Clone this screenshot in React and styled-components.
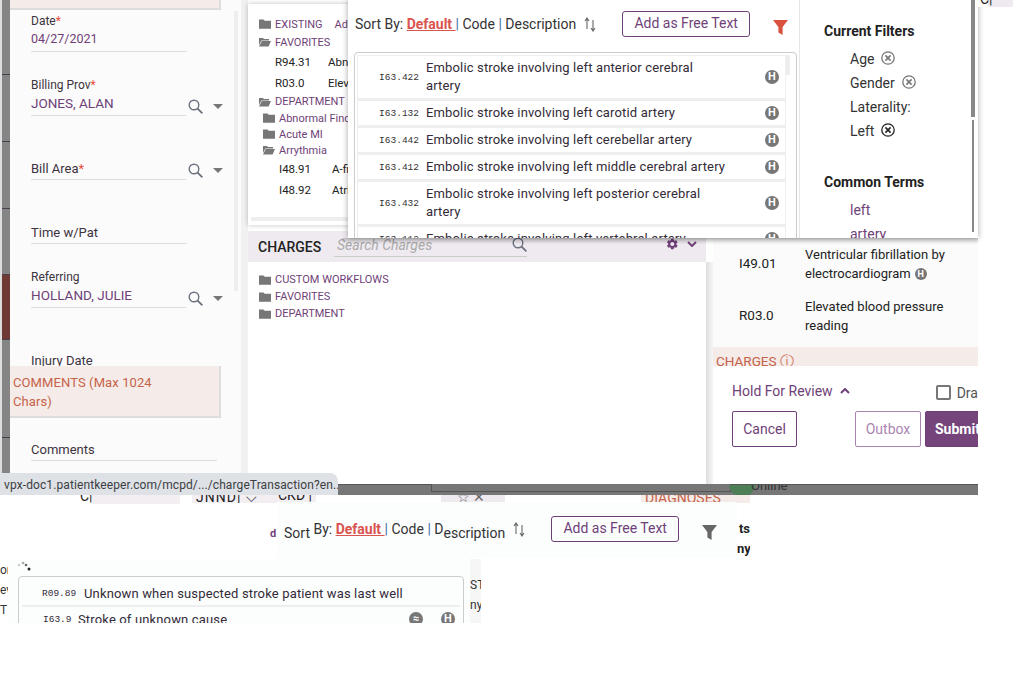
import React from "react";
import styled, { createGlobalStyle, css } from "styled-components";

const purple = "#6f3f78";
const rust = "#c5634a";
const font = `Roboto, "Liberation Sans", sans-serif`;

const GlobalStyle = createGlobalStyle`
  html, body { margin: 0; padding: 0; background: #fff; }
  body { font-family: ${font}; color: #333; }
  * { box-sizing: border-box; }
`;

// every broken browser layer in the shot sits on a free canvas
const win = (x, y, w, h) => css`
  position: absolute;
  left: ${x}px;
  top: ${y}px;
  width: ${w}px;
  height: ${h}px;
  overflow: hidden;
`;

const Canvas = styled.div`
  position: relative;
  width: 1034px;
  height: 682px;
  overflow: hidden;
  background: #fff;
`;

/* ---------- icons ---------- */
const Folder = ({ open }) => (
  <FolderSvg viewBox="0 0 12 10">
    {open ? (
      <path d="M0 1h4l1 1h5v1.4H2.4L0 8zM0 9.6 2.8 4H12L9.6 9.6z" fill="#777" />
    ) : (
      <path d="M0 .6h4.6l1 1.2H12v8H0z" fill="#777" />
    )}
  </FolderSvg>
);
const FolderSvg = styled.svg`
  width: 12px;
  height: 10px;
  flex: none;
`;

const SearchIcon = () => (
  <SearchSvg viewBox="0 0 15 15">
    <circle cx="6" cy="6" r="4.8" fill="none" stroke="#6b7280" strokeWidth="1.4" />
    <path d="M9.6 9.6 14.4 14.4" stroke="#6b7280" strokeWidth="1.8" />
  </SearchSvg>
);
const SearchSvg = styled.svg`
  width: 15px;
  height: 15px;
  flex: none;
`;

const Caret = styled.span`
  width: 0;
  height: 0;
  border-left: 5px solid transparent;
  border-right: 5px solid transparent;
  border-top: 5px solid #777;
  margin-left: 10px;
  flex: none;
`;

const SortArrows = () => (
  <SortSvg viewBox="0 0 12 15">
    <path d="M3 12V2M1 4l2-3 2 3" fill="none" stroke="#666" strokeWidth="1.1" />
    <path d="M9 3v10M7 11l2 3 2-3" fill="none" stroke="#666" strokeWidth="1.1" />
  </SortSvg>
);
const SortSvg = styled.svg`
  width: 12px;
  height: 15px;
  flex: none;
`;

const Funnel = ({ color }) => (
  <FunnelSvg viewBox="0 0 15 15">
    <path d="M0 0h15L9.6 7v8L5.4 12.6V7z" fill={color} />
  </FunnelSvg>
);
const FunnelSvg = styled.svg`
  width: 15px;
  height: 15px;
  flex: none;
`;

const HBadge = styled.span`
  width: ${(p) => p.$size || 14}px;
  height: ${(p) => p.$size || 14}px;
  border-radius: 50%;
  background: #777;
  color: #fff;
  font-size: ${(p) => (p.$size || 14) - 3}px;
  font-weight: 700;
  line-height: ${(p) => p.$size || 14}px;
  text-align: center;
  flex: none;
`;

const Clear = ({ dark }) => (
  <ClearSvg viewBox="0 0 14 14">
    <circle cx="7" cy="7" r="6.2" fill="none" stroke={dark ? "#222" : "#777"} strokeWidth="1.3" />
    <path d="M4.4 4.4l5.2 5.2M9.6 4.4l-5.2 5.2" stroke={dark ? "#222" : "#777"} strokeWidth="1.6" />
  </ClearSvg>
);
const ClearSvg = styled.svg`
  width: 14px;
  height: 14px;
  margin: -2px 0 0 7px;
  flex: none;
`;

const Chevron = ({ up }) => (
  <ChevronSvg viewBox="0 0 10 6">
    <path d={up ? "M1 5l4-4 4 4" : "M1 1l4 4 4-4"} fill="none" stroke={purple} strokeWidth="2" />
  </ChevronSvg>
);
const ChevronSvg = styled.svg`
  width: 10px;
  height: 6px;
  flex: none;
`;

const Gear = () => (
  <GearSvg viewBox="0 0 24 24">
    <path
      fill={purple}
      d="M19.4 13a7.5 7.5 0 0 0 0-2l2.2-1.7-2.2-3.7-2.6 1a7.6 7.6 0 0 0-1.7-1L14.7 3h-4.4l-.4 2.6c-.6.3-1.2.6-1.7 1l-2.6-1-2.2 3.7L5.6 11a7.5 7.5 0 0 0 0 2l-2.2 1.7 2.2 3.7 2.6-1c.5.4 1.1.7 1.7 1l.4 2.6h4.4l.4-2.6c.6-.3 1.2-.6 1.7-1l2.6 1 2.2-3.7zM12.5 15.5a3.5 3.5 0 1 1 0-7 3.5 3.5 0 0 1 0 7z"
    />
  </GearSvg>
);
const GearSvg = styled.svg`
  width: 14px;
  height: 14px;
  flex: none;
`;

/* ---------- far left strip and form ---------- */
const Strip = styled.div`
  ${win(0, 0, 10, 475)}
  border-left: 2px solid #ddd;
  background: #858585;
  display: flex;
  flex-direction: column;
`;
const StripCell = styled.div`
  height: ${(p) => p.$h}px;
  background: ${(p) => p.$bg || "#858585"};
  border-bottom: 1px solid #4b3f4f;
  flex: none;
`;

const FormWindow = styled.div`
  ${win(10, 0, 238, 475)}
  background: #fbfbfb;
  border-right: 7px solid #f1f1f1;
  padding: 0 0 0 21px;
`;
const TopBand = styled.div`
  ${win(10, 0, 211, 10)}
  background: #f5ebe8;
  border-right: 2px solid #ddd;
  border-bottom: 2px solid #ddd;
`;
const FormScroll = styled.div`
  ${win(234, 11, 4, 280)}
  background: #eee;
`;
const Field = styled.div`
  height: ${(p) => p.$h || 64}px;
  width: ${(p) => p.$w || 156}px;
  display: flex;
  flex-direction: column;
  justify-content: flex-end;
  border-bottom: 1px solid #ddd;
  padding-bottom: ${(p) => (p.$empty ? 1 : 3)}px;
`;
const FieldWrap = styled.div`
  display: flex;
  align-items: flex-end;
`;
const FieldTools = styled.div`
  display: flex;
  align-items: center;
  margin-left: 2px;
  margin-bottom: 2px;
`;
const Label = styled.div`
  font-size: ${(p) => (p.$small ? 12 : 13)}px;
  line-height: 18px;
  color: #3d3340;
`;
const Star = styled.span`
  color: #ef4d3f;
`;
const Value = styled.div`
  font-size: ${(p) => p.$size || 13.5}px;
  line-height: 18px;
  color: ${purple};
`;
const CommentsBand = styled.div`
  ${win(10, 366, 211, 52)}
  background: #f5ebe8;
  border-right: 2px solid #ddd;
  border-bottom: 2px solid #ddd;
  color: ${rust};
  font-size: 13px;
  letter-spacing: 0.1px;
  line-height: 19px;
  padding: 7px 50px 0 3px;
`;
const CommentsField = styled.div`
  ${win(31, 441, 186, 20)}
  border-bottom: 1px solid #ddd;
  font-size: 13px;
  line-height: 18px;
  color: #3d3340;
`;

/* ---------- code tree ---------- */
const TreeWindow = styled.div`
  ${win(248, 4, 110, 221)}
  background: #fff;
  box-shadow: 0 0 5px rgba(0, 0, 0, 0.25);
  padding: 11px 0 0 11px;
`;
const TreeScroll = styled.div`
  ${win(251, 217, 100, 4)}
  background: #eee;
`;
const TreeRow = styled.div`
  height: ${(p) => p.$h || 18}px;
  display: flex;
  align-items: center;
  gap: 4px;
  padding-left: ${(p) => (p.$sub ? 4 : 0)}px;
  font-size: 11px;
  color: ${purple};
  white-space: nowrap;
`;
const TreeExtra = styled.span`
  margin-left: 8px;
`;
const CodeRow = styled.div`
  height: 21px;
  display: flex;
  align-items: center;
  padding-left: ${(p) => (p.$sub ? 20 : 16)}px;
  font-size: 11.5px;
  color: #222;
  white-space: nowrap;
`;
const CodeCell = styled.span`
  width: 53px;
  flex: none;
`;
const SubRow = styled(TreeRow)`
  height: 16px;
`;

/* ---------- charges ---------- */
const ChargesWindow = styled.div`
  ${win(248, 231, 458, 253)}
  background: #fff;
  display: flex;
  flex-direction: column;
`;
const ChargesHead = styled.div`
  height: 31px;
  flex: none;
  background: #efeaf0;
  display: flex;
  align-items: center;
  padding: 0 9px 0 10px;
`;
const ChargesTitle = styled.div`
  font-size: 14px;
  font-weight: 500;
  color: #222;
  width: 76px;
`;
const SearchBox = styled.div`
  width: 193px;
  height: 26px;
  align-self: flex-start;
  display: flex;
  justify-content: space-between;
  padding: 0 0 0 3px;
  border-bottom: 1px solid #ccc;
  font-size: 14px;
  font-style: italic;
  line-height: 28px;
  color: #aaa;
  svg {
    margin-top: 6px;
  }
`;
const HeadTools = styled.div`
  margin-left: auto;
  margin-top: 6px;
  align-self: flex-start;
  display: flex;
  align-items: center;
  gap: 8px;
`;
const ChargesBody = styled.div`
  padding: 9px 0 0 11px;
`;
const ChargeRow = styled(TreeRow)`
  height: 17px;
`;
const SideShade = styled.div`
  ${win(706, 262, 7, 222)}
  background: linear-gradient(to right, #ddd, #f6f6f6);
`;

/* ---------- filter popup ---------- */
const Popup = styled.div`
  ${win(348, 0, 630, 238)}
  background: #fff;
  display: flex;
  box-shadow: 0 0 6px rgba(0, 0, 0, 0.35);
`;
const PopupShadow = styled.div`
  ${win(342, 238, 636, 6)}
  background: linear-gradient(to bottom, rgba(0, 0, 0, 0.18), rgba(0, 0, 0, 0));
`;
const PopupMain = styled.div`
  width: 451px;
  flex: none;
  padding: 11px 0 0 7px;
`;
const SortBar = styled.div`
  display: flex;
  align-items: flex-start;
  height: 41px;
  font-size: 14px;
  line-height: 26px;
  color: #333;
  white-space: pre;
`;
const DefaultLink = styled.span`
  color: #d9534f;
  font-weight: 700;
  text-decoration: underline;
`;
const Pipe = styled.span`
  color: #3a6ea5;
`;
const SortGap = styled.span`
  display: flex;
  margin: 6px 0 0 8px;
`;
const FreeTextButton = styled.div`
  width: 128px;
  height: 26px;
  margin-left: ${(p) => p.$ml || 26}px;
  border: 1px solid ${purple};
  border-radius: 3px;
  color: ${purple};
  font-size: 14px;
  line-height: 23px;
  text-align: center;
`;
const FunnelSlot = styled.div`
  margin: 6px 0 0 23px;
`;
const ListBox = styled.div`
  width: 443px;
  height: 190px;
  margin-left: -1px;
  border: 1px solid #ccc;
  border-radius: 4px;
  padding: 2px 10px 0 2px;
  overflow: hidden;
  position: relative;
`;
const ListScroll = styled.div`
  position: absolute;
  top: 2px;
  right: 6px;
  width: 4px;
  height: 20px;
  background: #eee;
`;
const CodeLine = styled.div`
  width: 429px;
  height: ${(p) => (p.$tall ? 45 : 27)}px;
  flex: none;
  display: flex;
  align-items: center;
  border: 1px solid #eee;
  border-bottom-width: 2px;
  padding-right: 6px;
  background: #fff;
`;
const SmallCode = styled.div`
  width: 68px;
  flex: none;
  font-family: "Liberation Mono", monospace;
  font-size: 9.5px;
  text-align: right;
  padding-right: 7px;
  color: #333;
`;
const CodeText = styled.div`
  flex: 1;
  font-size: 13px;
  line-height: 18px;
  letter-spacing: 0.15px;
  color: #332b38;
  padding-right: 36px;
`;
const FilterSide = styled.div`
  flex: 1;
  border-left: 1px solid #e5e5e5;
  padding: 23px 0 0 24px;
  position: relative;
`;
const SideTitle = styled.div`
  font-size: 14px;
  font-weight: 700;
  line-height: 16px;
  color: #222;
  margin-bottom: ${(p) => p.$mb || 8}px;
`;
const FilterItem = styled.div`
  display: flex;
  align-items: center;
  height: 24px;
  padding-left: 26px;
  font-size: 14px;
  color: #333;
`;
const TermItem = styled(FilterItem)`
  color: ${purple};
`;
const FilterGap = styled.div`
  height: 31px;
`;
const SideScroll = styled.div`
  ${win(971, 0, 4, 117)}
  background: #888;
`;
const SideScrollLow = styled.div`
  ${win(972, 120, 2, 112)}
  background: #888;
`;

/* ---------- right summary and footer ---------- */
const SummaryWindow = styled.div`
  ${win(713, 238, 265, 109)}
  background: #fbfbfb;
`;
const SummaryRow = styled.div`
  display: flex;
  align-items: center;
  height: 52px;
  font-size: 13.5px;
  line-height: 19.5px;
  color: #222;
`;
const SummaryCode = styled.div`
  width: 92px;
  padding-left: 26px;
  flex: none;
`;
const SummaryText = styled.div`
  width: 160px;
  font-size: 13px;
`;
const InlineBadge = styled(HBadge)`
  display: inline-block;
  margin-left: 4px;
  vertical-align: 1px;
`;
const ChargesBand = styled.div`
  ${win(713, 347, 265, 19)}
  background: #f5ebe8;
  color: ${rust};
  font-size: 13.5px;
  line-height: 28px;
  padding-left: 3px;
`;
const Footer = styled.div`
  ${win(713, 366, 265, 118)}
  background: #fff;
  padding: 16px 0 0 19px;
`;
const FooterTop = styled.div`
  display: flex;
  align-items: center;
  height: 18px;
  font-size: 14px;
  color: ${purple};
  gap: 7px;
  white-space: nowrap;
`;
const DraftBox = styled.span`
  width: 15px;
  height: 15px;
  border: 2px solid #777;
  border-radius: 2px;
  margin: 3px -1px 0 79px;
  flex: none;
`;
const DraftLabel = styled.span`
  margin-top: 3px;
  color: #555;
`;
const FooterButtons = styled.div`
  display: flex;
  margin-top: 11px;
  gap: 4px;
`;
const FootButton = styled.div`
  height: 36px;
  border: 1px solid ${(p) => (p.$muted ? "#a986b0" : purple)};
  border-radius: 2px;
  color: ${(p) => (p.$muted ? "#a986b0" : p.$fill ? "#fff" : purple)};
  background: ${(p) => (p.$fill ? "#74447a" : "#fff")};
  font-size: 14px;
  font-weight: ${(p) => (p.$fill ? 700 : 400)};
  line-height: 34px;
  text-align: ${(p) => (p.$fill ? "left" : "center")};
  width: ${(p) => p.$w}px;
  padding-left: ${(p) => (p.$fill ? 9 : 0)}px;
  margin-left: ${(p) => p.$ml || 0}px;
  flex: none;
  white-space: nowrap;
`;

/* ---------- glitch band and fragments ---------- */
const Band = styled.div`
  ${win(338, 484, 640, 11)}
  background: #777;
  border-top: 1px solid #555;
`;
const BandRule = styled.div`
  ${win(431, 484, 300, 8)}
  background: #777;
  border: 1px solid #555;
  border-top: 0;
`;
const OnlineSlot = styled.div`
  ${win(729, 485, 249, 10)}
  display: flex;
`;
const OnlineDot = styled.span`
  width: 26px;
  height: 26px;
  margin-top: -14px;
  border-radius: 50%;
  background: #4d7e55;
  flex: none;
`;
const OnlineText = styled.span`
  margin: -7px 0 0 -4px;
  font-size: 13px;
  color: #333;
`;
const Tooltip = styled.div`
  ${win(0, 473, 338, 22)}
  background: #dee1e6;
  border-radius: 0 8px 0 0;
  font-size: 12px;
  letter-spacing: 0.1px;
  line-height: 24px;
  padding-left: 4px;
  color: #3c4043;
  white-space: nowrap;
`;
const Fragment = styled.div`
  background: ${(p) => p.$bg || "#fff"};
  display: flex;
  align-items: flex-end;
  overflow: hidden;
  font-size: 14px;
  color: #222;
  white-space: nowrap;
`;
const FragC = styled(Fragment)`
  ${win(80, 495, 100, 9)}
  background: linear-gradient(to right, #fff 12px, #f2eef2 12px);
`;
const FragName = styled(Fragment)`
  ${win(192, 495, 84, 8)}
  padding-left: 4px;
  line-height: 12px;
  letter-spacing: 1px;
  background: #f2eef2;
`;
const FragCkd = styled(Fragment)`
  ${win(270, 495, 46, 8)}
  padding-left: 8px;
  background: #f2eef2;
`;
const FragStar = styled(Fragment)`
  ${win(441, 495, 64, 10)}
  background: #efeaf0;
  color: #666;
  padding-left: 16px;
  gap: 3px;
`;
const FragDiag = styled(Fragment)`
  ${win(641, 495, 109, 8)}
  background: #f5ebe8;
  color: ${rust};
  line-height: 10px;
  padding-left: 4px;
`;
const FragTop = styled(Fragment)`
  ${win(978, 0, 35, 7)}
  background: linear-gradient(to right, #fff 10px, #efeaf0 10px);
  padding-left: 2px;
`;
const FragD = styled.div`
  ${win(270, 527, 7, 14)}
  font-size: 11px;
  font-weight: 700;
  color: ${purple};
`;
const FragSide = styled.div`
  ${win(737, 519, 13, 38)}
  font-size: 13px;
  font-weight: 700;
  line-height: 20px;
  color: #222;
  text-align: right;
`;

/* ---------- second popup ---------- */
const Popup2 = styled.div`
  ${win(277, 502, 460, 56)}
  background: #fcfefe;
  padding: 14px 0 0 7px;
`;
const Low = styled.span`
  margin-top: ${(p) => (p.$low ? 4 : 0)}px;
`;
const Popup2Bar = styled(SortBar)`
  height: 30px;
`;
const Panel2 = styled.div`
  ${win(8, 559, 462, 64)}
  background: #fcfefe;
  padding: 2px 0 0 10px;
`;
const Spinner = styled.svg`
  width: 14px;
  height: 12px;
  display: block;
  margin-left: -1px;
`;
const ListBox2 = styled.div`
  width: 446px;
  height: 60px;
  margin-top: 3px;
  border: 1px solid #ccc;
  border-radius: 4px;
  padding: 4px 3px 0;
`;
const Row2 = styled.div`
  display: flex;
  align-items: center;
  height: 26px;
  border-bottom: 2px solid #eee;
  font-size: 13px;
  letter-spacing: 0.15px;
  color: #332b38;
`;
const Code2 = styled.span`
  width: ${(p) => p.$w}px;
  padding-left: ${(p) => p.$pl}px;
  flex: none;
  font-family: "Liberation Mono", monospace;
  font-size: 9.5px;
  letter-spacing: 0;
`;
const Row2Text = styled.span`
  flex: 1;
`;
const Row2Badges = styled.span`
  display: flex;
  gap: 18px;
  margin-right: 5px;
`;
const SideLeft = styled.div`
  ${win(0, 559, 8, 64)}
  font-size: 12px;
  line-height: 20px;
  padding-top: 1px;
  white-space: nowrap;
`;
const SideRight = styled.div`
  ${win(470, 559, 11, 64)}
  background: #f6f6f6;
  font-size: 12px;
  line-height: 20px;
  padding-top: 16px;
  white-space: nowrap;
`;

const codes = [
  { code: "I63.422", text: "Embolic stroke involving left anterior cerebral artery", tall: true },
  { code: "I63.132", text: "Embolic stroke involving left carotid artery" },
  { code: "I63.442", text: "Embolic stroke involving left cerebellar artery" },
  { code: "I63.412", text: "Embolic stroke involving left middle cerebral artery" },
  { code: "I63.432", text: "Embolic stroke involving left posterior cerebral artery", tall: true },
  { code: "I63.112", text: "Embolic stroke involving left vertebral artery" },
];

const FormField = ({ label, star, value, valueSize, tools, w, h }) => (
  <FieldWrap>
    <Field $w={w} $h={h} $empty={!value}>
      <Label $small={!!value}>
        {label}
        {star && <Star>*</Star>}
      </Label>
      {value && <Value $size={valueSize}>{value}</Value>}
    </Field>
    {tools && (
      <FieldTools>
        <SearchIcon />
        <Caret />
      </FieldTools>
    )}
  </FieldWrap>
);

const SortLabel = () => (
  <>
    Sort By: <DefaultLink>Default </DefaultLink>
    <Pipe>|</Pipe> Code <Pipe>|</Pipe> Description
  </>
);

const App = () => {
  return (
    <Canvas>
      <GlobalStyle />

      <Strip>
        <StripCell $h={75} />
        <StripCell $h={67} />
        <StripCell $h={67} />
        <StripCell $h={66} />
        <StripCell $h={65} $bg="#6f3a33" />
        <StripCell $h={98} />
      </Strip>

      <FormWindow>
        <FormField label="Date" star value="04/27/2021" valueSize={12.5} h={52} />
        <FormField label="Billing Prov" star value="JONES, ALAN" tools w={155} />
        <FormField label="Bill Area" star tools w={155} />
        <FormField label="Time w/Pat" />
        <FormField label="Referring" value="HOLLAND, JULIE" tools w={155} />
        <FormField label="Injury Date" />
      </FormWindow>
      <TopBand />
      <FormScroll />
      <CommentsBand>COMMENTS (Max 1024 Chars)</CommentsBand>
      <CommentsField>Comments</CommentsField>

      <TreeWindow>
        <TreeRow>
          <Folder />
          EXISTING<TreeExtra>Add</TreeExtra>
        </TreeRow>
        <TreeRow>
          <Folder open />
          FAVORITES
        </TreeRow>
        <CodeRow>
          <CodeCell>R94.31</CodeCell>Abnormal
        </CodeRow>
        <CodeRow>
          <CodeCell>R03.0</CodeCell>Elevated
        </CodeRow>
        <TreeRow $h={17}>
          <Folder open />
          DEPARTMENT
        </TreeRow>
        <SubRow $sub>
          <Folder />
          Abnormal Findings
        </SubRow>
        <SubRow $sub>
          <Folder />
          Acute MI
        </SubRow>
        <SubRow $sub>
          <Folder open />
          Arrythmia
        </SubRow>
        <CodeRow $sub>
          <CodeCell>I48.91</CodeCell>A-fib
        </CodeRow>
        <CodeRow $sub>
          <CodeCell>I48.92</CodeCell>Atrial
        </CodeRow>
      </TreeWindow>
      <TreeScroll />

      <ChargesWindow>
        <ChargesHead>
          <ChargesTitle>CHARGES</ChargesTitle>
          <SearchBox>
            Search Charges
            <SearchIcon />
          </SearchBox>
          <HeadTools>
            <Gear />
            <Chevron />
          </HeadTools>
        </ChargesHead>
        <ChargesBody>
          {["CUSTOM WORKFLOWS", "FAVORITES", "DEPARTMENT"].map((t) => (
            <ChargeRow key={t}>
              <Folder />
              {t}
            </ChargeRow>
          ))}
        </ChargesBody>
      </ChargesWindow>
      <SideShade />

      <SummaryWindow>
        <SummaryRow>
          <SummaryCode>I49.01</SummaryCode>
          <SummaryText>
            Ventricular fibrillation by electrocardiogram
            <InlineBadge $size={12}>H</InlineBadge>
          </SummaryText>
        </SummaryRow>
        <SummaryRow>
          <SummaryCode>R03.0</SummaryCode>
          <SummaryText>Elevated blood pressure reading</SummaryText>
        </SummaryRow>
      </SummaryWindow>
      <ChargesBand>CHARGES ⓘ</ChargesBand>
      <Footer>
        <FooterTop>
          Hold For Review <Chevron up />
          <DraftBox />
          <DraftLabel>Draft</DraftLabel>
        </FooterTop>
        <FooterButtons>
          <FootButton $w={65}>Cancel</FootButton>
          <FootButton $w={66} $ml={54} $muted>
            Outbox
          </FootButton>
          <FootButton $w={80} $fill>
            Submit
          </FootButton>
        </FooterButtons>
      </Footer>

      <Band />
      <BandRule />
      <OnlineSlot>
        <OnlineDot />
        <OnlineText>Online</OnlineText>
      </OnlineSlot>

      <Popup>
        <PopupMain>
          <SortBar>
            <SortLabel />
            <SortGap>
              <SortArrows />
            </SortGap>
            <FreeTextButton>Add as Free Text</FreeTextButton>
            <FunnelSlot>
              <Funnel color="#d9523f" />
            </FunnelSlot>
          </SortBar>
          <ListBox>
            <ListScroll />
            {codes.map((c) => (
              <CodeLine key={c.code} $tall={c.tall}>
                <SmallCode>{c.code}</SmallCode>
                <CodeText>{c.text}</CodeText>
                <HBadge>H</HBadge>
              </CodeLine>
            ))}
          </ListBox>
        </PopupMain>
        <FilterSide>
          <SideTitle>Current Filters</SideTitle>
          <FilterItem>
            Age
            <Clear />
          </FilterItem>
          <FilterItem>
            Gender
            <Clear />
          </FilterItem>
          <FilterItem>Laterality:</FilterItem>
          <FilterItem>
            Left
            <Clear dark />
          </FilterItem>
          <FilterGap />
          <SideTitle $mb={8}>Common Terms</SideTitle>
          <TermItem>left</TermItem>
          <TermItem>artery</TermItem>
        </FilterSide>
      </Popup>
      <PopupShadow />
      <SideScroll />
      <SideScrollLow />
      <FragTop>C|</FragTop>

      <Tooltip>vpx-doc1.patientkeeper.com/mcpd/.../chargeTransaction?en...</Tooltip>

      <FragC>C|</FragC>
      <FragName>JNND| ⌵</FragName>
      <FragCkd>CKD |</FragCkd>
      <FragStar>☆ ✕</FragStar>
      <FragDiag>DIAGNOSES</FragDiag>
      <FragD>d</FragD>
      <FragSide>
        ts
        <br />
        ny
      </FragSide>

      <Popup2>
        <Popup2Bar>
          <Low $low>Sort </Low>
          <Low>
            By: <DefaultLink>Default </DefaultLink>
            <Pipe>|</Pipe> Code <Pipe>|</Pipe> D
          </Low>
          <Low $low>escription</Low>
          <SortGap>
            <SortArrows />
          </SortGap>
          <FreeTextButton>Add as Free Text</FreeTextButton>
          <FunnelSlot>
            <Funnel color="#666" />
          </FunnelSlot>
        </Popup2Bar>
      </Popup2>

      <SideLeft>
        on
        <br />
        ev
        <br />T
      </SideLeft>
      <Panel2>
        <Spinner viewBox="0 0 14 12">
          <circle cx="2" cy="4" r="1.3" fill="#ccc" />
          <circle cx="6" cy="2" r="1.3" fill="#aaa" />
          <circle cx="9" cy="4" r="1.3" fill="#666" />
          <circle cx="12" cy="8" r="1.5" fill="#222" />
        </Spinner>
        <ListBox2>
          <Row2>
            <Code2 $w={62} $pl={20}>R09.89</Code2>
            <Row2Text>Unknown when suspected stroke patient was last well</Row2Text>
          </Row2>
          <Row2>
            <Code2 $w={56} $pl={21}>I63.9</Code2>
            <Row2Text>Stroke of unknown cause</Row2Text>
            <Row2Badges>
              <HBadge>≈</HBadge>
              <HBadge>H</HBadge>
            </Row2Badges>
          </Row2>
        </ListBox2>
      </Panel2>
      <SideRight>
        ST
        <br />
        ny
      </SideRight>
    </Canvas>
  );
};

export default App;
